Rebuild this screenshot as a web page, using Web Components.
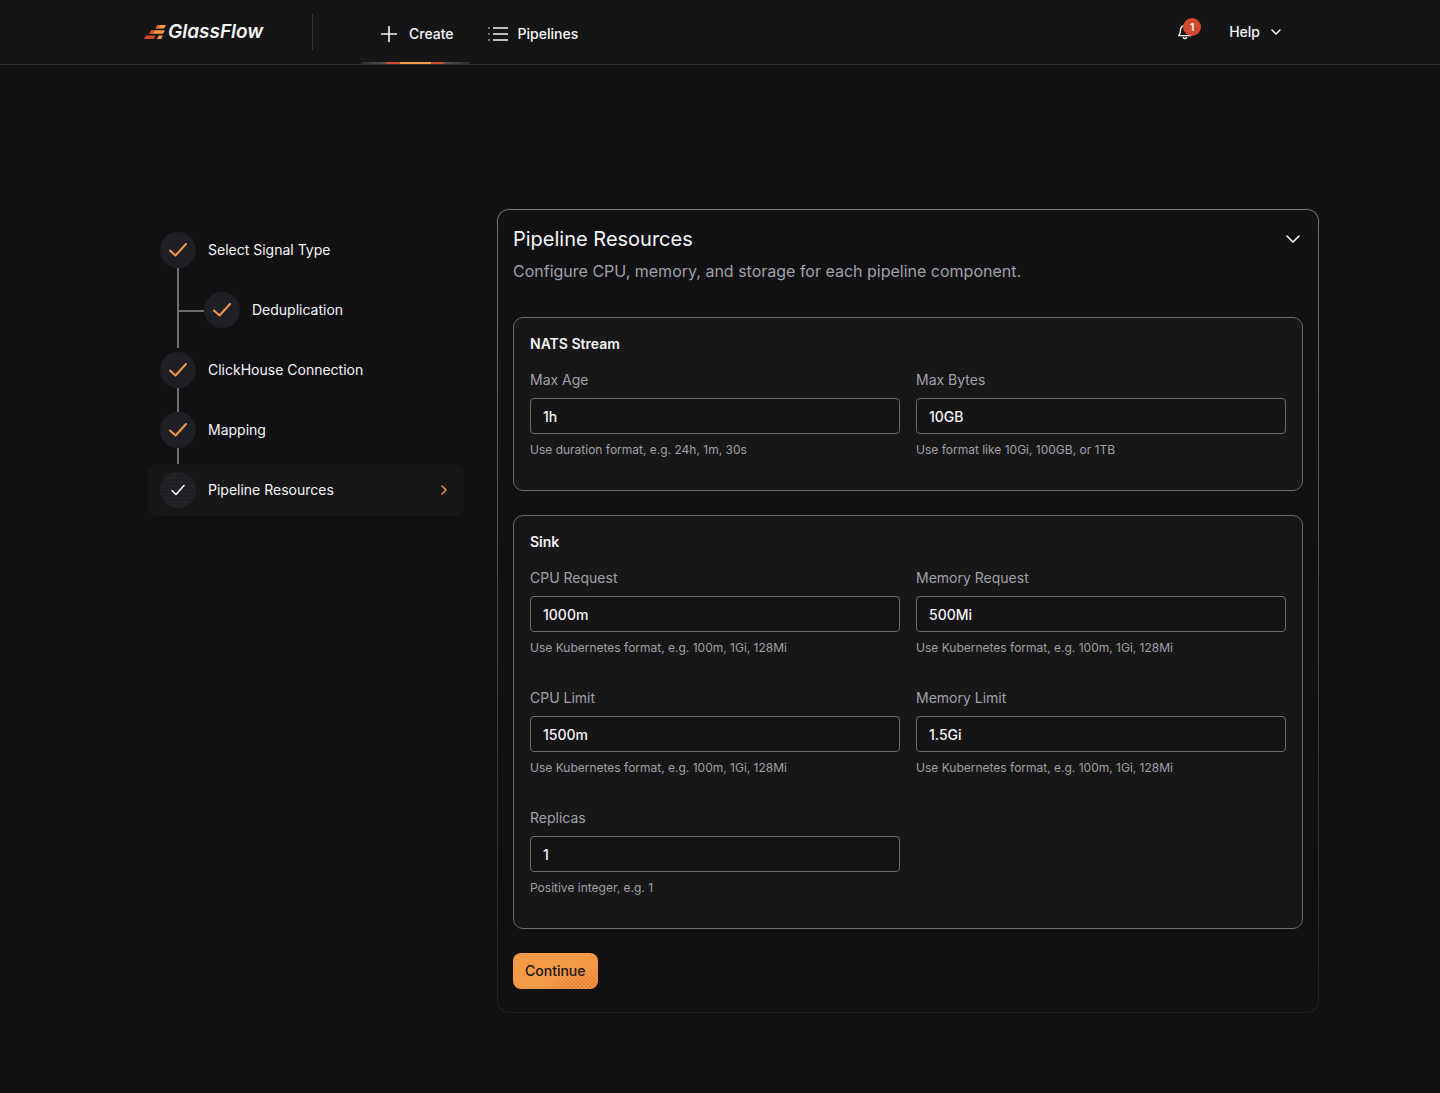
<!DOCTYPE html>
<html lang="en">
<head>
<meta charset="utf-8">
<meta name="viewport" content="width=device-width, initial-scale=1">
<title>GlassFlow - Pipeline Resources</title>
<style>
    :root {
        --page-bg: #111113;
        --header-bg: #151515;
        --card-bg: #171717;
        --input-bg: #141414;
        --border-color: #6c6c6c;
        --text: #f5f5f7;
        --text-muted: #a0a0a9;
        --accent: #f49a46;
        --accent-deep: #d1492e;
    }

    body {
        margin: 0;
        min-height: 100vh;
        background: var(--page-bg);
        color: var(--text);
        font: 400 14px/20px Inter, "Liberation Sans", sans-serif;
    }

    main {
        display: grid;
        grid-template-columns: 316px minmax(0, 1fr);
        gap: 33px;
        align-items: start;
        padding: 144px 121px 80px 148px;
    }
</style>
</head>
<body>
<app-header></app-header>
<main>
    <step-list>
        <step-item label="Select Signal Type" state="done" link="long"></step-item>
        <step-item label="Deduplication" state="done" nested></step-item>
        <step-item label="ClickHouse Connection" state="done" link="short"></step-item>
        <step-item label="Mapping" state="done" link="short"></step-item>
        <step-item label="Pipeline Resources" state="active"></step-item>
    </step-list>
    <resource-panel heading="Pipeline Resources" description="Configure CPU, memory, and storage for each pipeline component.">
        <resource-card heading="NATS Stream">
            <form-field label="Max Age" value="1h" hint="Use duration format, e.g. 24h, 1m, 30s"></form-field>
            <form-field label="Max Bytes" value="10GB" hint="Use format like 10Gi, 100GB, or 1TB"></form-field>
        </resource-card>
        <resource-card heading="Sink">
            <form-field label="CPU Request" value="1000m" hint="Use Kubernetes format, e.g. 100m, 1Gi, 128Mi"></form-field>
            <form-field label="Memory Request" value="500Mi" hint="Use Kubernetes format, e.g. 100m, 1Gi, 128Mi"></form-field>
            <form-field label="CPU Limit" value="1500m" hint="Use Kubernetes format, e.g. 100m, 1Gi, 128Mi"></form-field>
            <form-field label="Memory Limit" value="1.5Gi" hint="Use Kubernetes format, e.g. 100m, 1Gi, 128Mi"></form-field>
            <form-field label="Replicas" value="1" hint="Positive integer, e.g. 1"></form-field>
        </resource-card>
        <primary-button slot="actions">Continue</primary-button>
    </resource-panel>
</main>

<script>
class AppHeader extends HTMLElement {
    constructor() {
        super();
        this.attachShadow({ mode: 'open' });
        this.shadowRoot.innerHTML = `
            <style>
                :host {
                    display: block;
                    background: var(--header-bg);
                    border-bottom: 1px solid #363638;
                }
                .bar {
                    display: flex;
                    align-items: center;
                    justify-content: space-between;
                    max-width: 1152px;
                    height: 64px;
                    margin: 0 auto;
                }
                .left, .right, nav {
                    display: flex;
                    align-items: center;
                }
                .left, nav { gap: 48px; }
                .right { gap: 16px; }
                a { color: inherit; text-decoration: none; }
                .logo {
                    display: flex;
                    align-items: center;
                    gap: 2px;
                    width: 120px;
                    font: italic 600 19px/24px Inter, sans-serif;
                    white-space: nowrap;
                }
                .logo svg { flex: none; }
                .divider {
                    width: 1px;
                    height: 36px;
                    background: #363638;
                }
                .links { display: flex; }
                .links a {
                    display: flex;
                    align-items: center;
                    gap: 8px;
                    height: 60px;
                    padding: 4px 16px 0;
                    font-weight: 500;
                    position: relative;
                }
                .links a.current::after {
                    content: '';
                    position: absolute;
                    left: 0;
                    right: 0;
                    bottom: 0;
                    height: 2px;
                    background: linear-gradient(90deg, #2b2b2b, #555 22%, var(--accent-deep) 24% 36%, var(--accent) 36% 64%, var(--accent-deep) 64% 75%, #555 77%, #2b2b2b);
                }
                button {
                    display: flex;
                    align-items: center;
                    justify-content: center;
                    gap: 8px;
                    height: 36px;
                    margin: 0;
                    padding: 0 12px;
                    border: 0;
                    background: none;
                    color: inherit;
                    font: inherit;
                    font-weight: 500;
                }
                .bell { width: 32px; padding: 0; position: relative; }
                .badge {
                    position: absolute;
                    top: 4px;
                    right: 0;
                    width: 18px;
                    height: 18px;
                    border-radius: 50%;
                    background: var(--accent-deep);
                    font-size: 10px;
                    font-weight: 700;
                    line-height: 18px;
                    text-align: center;
                }
            </style>
            <header class="bar">
                <div class="left">
                    <a class="logo" href="#" aria-label="GlassFlow">
                        <svg width="22" height="16" viewBox="0 0 22 16">
                            <path d="M13.500 1H22l-2 3.600h-8.500z" fill="#f49a46"/>
                            <path d="M13.500 1h2.500l-2 3.600h-2.500z" fill="#d95a35"/>
                            <path d="M7.400 6.200h13.400l-1.800 3.600H5.200z" fill="#f49a46"/>
                            <path d="M7.400 6.200h3.400L9 9.800H5.200z" fill="#d1492e"/>
                            <path d="M2.200 11.400h9.400l-2 3.600H0z" fill="#d1492e"/>
                            <path d="M14.600 11.400h4.200L17.200 15h-4z" fill="#f49a46"/>
                        </svg>
                        <span>GlassFlow</span>
                    </a>
                    <nav>
                        <span class="divider"></span>
                        <div class="links">
                            <a class="current" href="#create">
                                <svg width="24" height="24" fill="none" stroke="currentColor" stroke-width="1.600"><path d="M12 4v16M4 12h16"/></svg>
                                <span>Create</span>
                            </a>
                            <a href="#pipelines">
                                <svg width="24" height="24" fill="none" stroke="currentColor" stroke-width="1.600"><path d="M7 6h15M7 12h15M7 18h15"/><path stroke="#8a8a8d" d="M2 6h2M2 12h2M2 18h2"/></svg>
                                <span>Pipelines</span>
                            </a>
                        </div>
                    </nav>
                </div>
                <div class="right">
                    <button class="bell" type="button" aria-label="Notifications">
                        <svg width="16" height="16" viewBox="0 0 16 16" fill="none" stroke="currentColor" stroke-width="1.400" stroke-linejoin="round"><path d="M8 1.500A4.500 4.500 0 0 0 3.500 6c0 3-.7 4.300-1.700 5.600h12.400C13.200 10.300 12.500 9 12.500 6A4.500 4.500 0 0 0 8 1.500z"/><path d="M6.400 13.600c.7 1.200 2.500 1.200 3.200 0" stroke-linecap="round"/></svg>
                        <span class="badge">1</span>
                    </button>
                    <button type="button">
                        <span>Help</span>
                        <svg width="16" height="16" fill="none" stroke="currentColor" stroke-width="1.500" stroke-linecap="round" stroke-linejoin="round"><path d="M4 6l4 4 4-4"/></svg>
                    </button>
                </div>
            </header>
        `;
    }
}

class StepList extends HTMLElement {
    constructor() {
        super();
        this.attachShadow({ mode: 'open' });
        this.shadowRoot.innerHTML = `
            <style>
                :host { display: block; }
                div {
                    display: flex;
                    flex-direction: column;
                    gap: 8px;
                    padding-top: 15px;
                }
            </style>
            <div role="list"><slot></slot></div>
        `;
    }
}

class StepItem extends HTMLElement {
    constructor() {
        super();
        this.attachShadow({ mode: 'open' });
    }

    connectedCallback() {
        const active = this.getAttribute('state') === 'active';
        const check = active
            ? '<path d="M12 18.500l4 4 8-9" stroke="#f5f5f7" stroke-width="1.600"/>'
            : '<path d="M10 18.500l5.500 5L26 12" stroke="#f49a46" stroke-width="2"/>';
        this.setAttribute('role', 'listitem');
        this.shadowRoot.innerHTML = `
            <style>
                :host {
                    display: block;
                    position: relative;
                }
                .row {
                    display: flex;
                    align-items: center;
                    gap: 12px;
                    height: 52px;
                    padding: 0 12px;
                    border-radius: 8px;
                }
                :host([nested]) .row { padding-left: 56px; }
                :host([state="active"]) .row { background: var(--card-bg); }
                .mark {
                    width: 36px;
                    height: 36px;
                    border-radius: 50%;
                    background: radial-gradient(#191a1d, transparent 1px) 0 0 / 4px 4px, #1f2025;
                }
                :host([state="active"]) .mark {
                    background: radial-gradient(#2d2e35, transparent 1px) 0 0 / 4px 4px, #1f2025;
                }
                .mark svg { display: block; }
                .arrow { margin-left: auto; }
                /* vertical connector down to the next top-level step */
                :host([link])::after {
                    content: '';
                    position: absolute;
                    left: 29px;
                    top: 44px;
                    width: 2px;
                    height: 24px;
                    background: var(--border-color);
                }
                :host([link="long"])::after { height: 80px; }
                /* branch to a nested step */
                :host([nested])::before {
                    content: '';
                    position: absolute;
                    left: 30px;
                    top: 26px;
                    width: 26px;
                    height: 2px;
                    background: var(--border-color);
                }
            </style>
            <div class="row">
                <span class="mark"><svg width="36" height="36" fill="none" stroke-linecap="round" stroke-linejoin="round">${check}</svg></span>
                <span>${this.getAttribute('label')}</span>
                ${active ? '<svg class="arrow" width="16" height="16" fill="none" stroke="#f49a46" stroke-width="1.500" stroke-linecap="round" stroke-linejoin="round"><path d="M6 4l4 4-4 4"/></svg>' : ''}
            </div>
        `;
    }
}

class ResourcePanel extends HTMLElement {
    constructor() {
        super();
        this.attachShadow({ mode: 'open' });
    }

    connectedCallback() {
        this.shadowRoot.innerHTML = `
            <style>
                :host {
                    display: block;
                    padding: 15px 15px 23px;
                    border: 1px solid transparent;
                    border-radius: 12px;
                    background:
                        linear-gradient(var(--page-bg), var(--page-bg)) padding-box,
                        linear-gradient(#747474, #4a4a4b 50%, #202022) border-box;
                }
                .head {
                    display: flex;
                    align-items: center;
                    justify-content: space-between;
                }
                h1 {
                    margin: 0;
                    font-size: 20px;
                    line-height: 28px;
                    font-weight: 400;
                }
                p {
                    margin: 6px 0 34px;
                    font-size: 16px;
                    line-height: 24px;
                    color: var(--text-muted);
                }
                button {
                    display: block;
                    padding: 0;
                    border: 0;
                    background: none;
                    color: inherit;
                }
                button svg { display: block; }
                .content {
                    display: flex;
                    flex-direction: column;
                    align-items: stretch;
                    gap: 24px;
                }
                .actions { display: flex; }
            </style>
            <div class="head">
                <h1>${this.getAttribute('heading')}</h1>
                <button type="button" aria-label="Collapse section">
                    <svg width="20" height="20" fill="none" stroke="currentColor" stroke-width="1.600" stroke-linecap="round" stroke-linejoin="round"><path d="M4 7l6 6 6-6"/></svg>
                </button>
            </div>
            <p>${this.getAttribute('description')}</p>
            <div class="content">
                <slot></slot>
                <div class="actions"><slot name="actions"></slot></div>
            </div>
        `;
    }
}

class ResourceCard extends HTMLElement {
    constructor() {
        super();
        this.attachShadow({ mode: 'open' });
    }

    connectedCallback() {
        this.shadowRoot.innerHTML = `
            <style>
                :host {
                    display: block;
                    padding: 16px;
                    border: 1px solid var(--border-color);
                    border-radius: 10px;
                    background: var(--card-bg);
                }
                h2 {
                    margin: 0 0 16px;
                    font-size: 14px;
                    line-height: 20px;
                    font-weight: 600;
                }
                .grid {
                    display: grid;
                    grid-template-columns: repeat(2, minmax(0, 1fr));
                    gap: 16px;
                }
            </style>
            <h2>${this.getAttribute('heading')}</h2>
            <div class="grid"><slot></slot></div>
        `;
    }
}

class FormField extends HTMLElement {
    constructor() {
        super();
        this.attachShadow({ mode: 'open' });
    }

    connectedCallback() {
        this.shadowRoot.innerHTML = `
            <style>
                :host {
                    display: block;
                    padding-bottom: 16px;
                }
                label {
                    display: block;
                    margin-bottom: 8px;
                    color: var(--text-muted);
                }
                input {
                    display: block;
                    box-sizing: border-box;
                    width: 100%;
                    height: 36px;
                    margin: 0 0 8px;
                    padding: 0 12px;
                    border: 1px solid var(--border-color);
                    border-radius: 4px;
                    background: var(--input-bg);
                    color: var(--text);
                    font: inherit;
                    font-weight: 500;
                    outline: none;
                }
                input:focus { border-color: var(--accent); }
                .hint {
                    font-size: 12px;
                    line-height: 16px;
                    color: var(--text-muted);
                }
            </style>
            <label for="field">${this.getAttribute('label')}</label>
            <input id="field" type="text" value="${this.getAttribute('value')}" aria-describedby="hint">
            <div class="hint" id="hint">${this.getAttribute('hint')}</div>
        `;
    }
}

class PrimaryButton extends HTMLElement {
    constructor() {
        super();
        this.attachShadow({ mode: 'open' });
        this.shadowRoot.innerHTML = `
            <style>
                :host { display: block; }
                button {
                    position: relative;
                    overflow: hidden;
                    height: 36px;
                    margin: 0;
                    padding: 0 12px;
                    border: 0;
                    border-radius: 8px;
                    background: var(--accent);
                    color: #151515;
                    font: inherit;
                    font-weight: 500;
                }
                /* speckled corner shade */
                button::after {
                    content: '';
                    position: absolute;
                    inset: 0;
                    background:
                        radial-gradient(circle at 1px 1px, var(--accent-deep), transparent 1px) 0 0 / 4px 4px,
                        radial-gradient(circle at 3px 3px, var(--accent-deep), transparent 1px) 0 0 / 4px 4px;
                    -webkit-mask: radial-gradient(55px 24px at 100% 100%, #000 50%, transparent);
                    mask: radial-gradient(55px 24px at 100% 100%, #000 50%, transparent);
                }
            </style>
            <button type="button"><slot></slot></button>
        `;
    }
}

customElements.define('app-header', AppHeader);
customElements.define('step-list', StepList);
customElements.define('step-item', StepItem);
customElements.define('resource-panel', ResourcePanel);
customElements.define('resource-card', ResourceCard);
customElements.define('form-field', FormField);
customElements.define('primary-button', PrimaryButton);
</script>
</body>
</html>
